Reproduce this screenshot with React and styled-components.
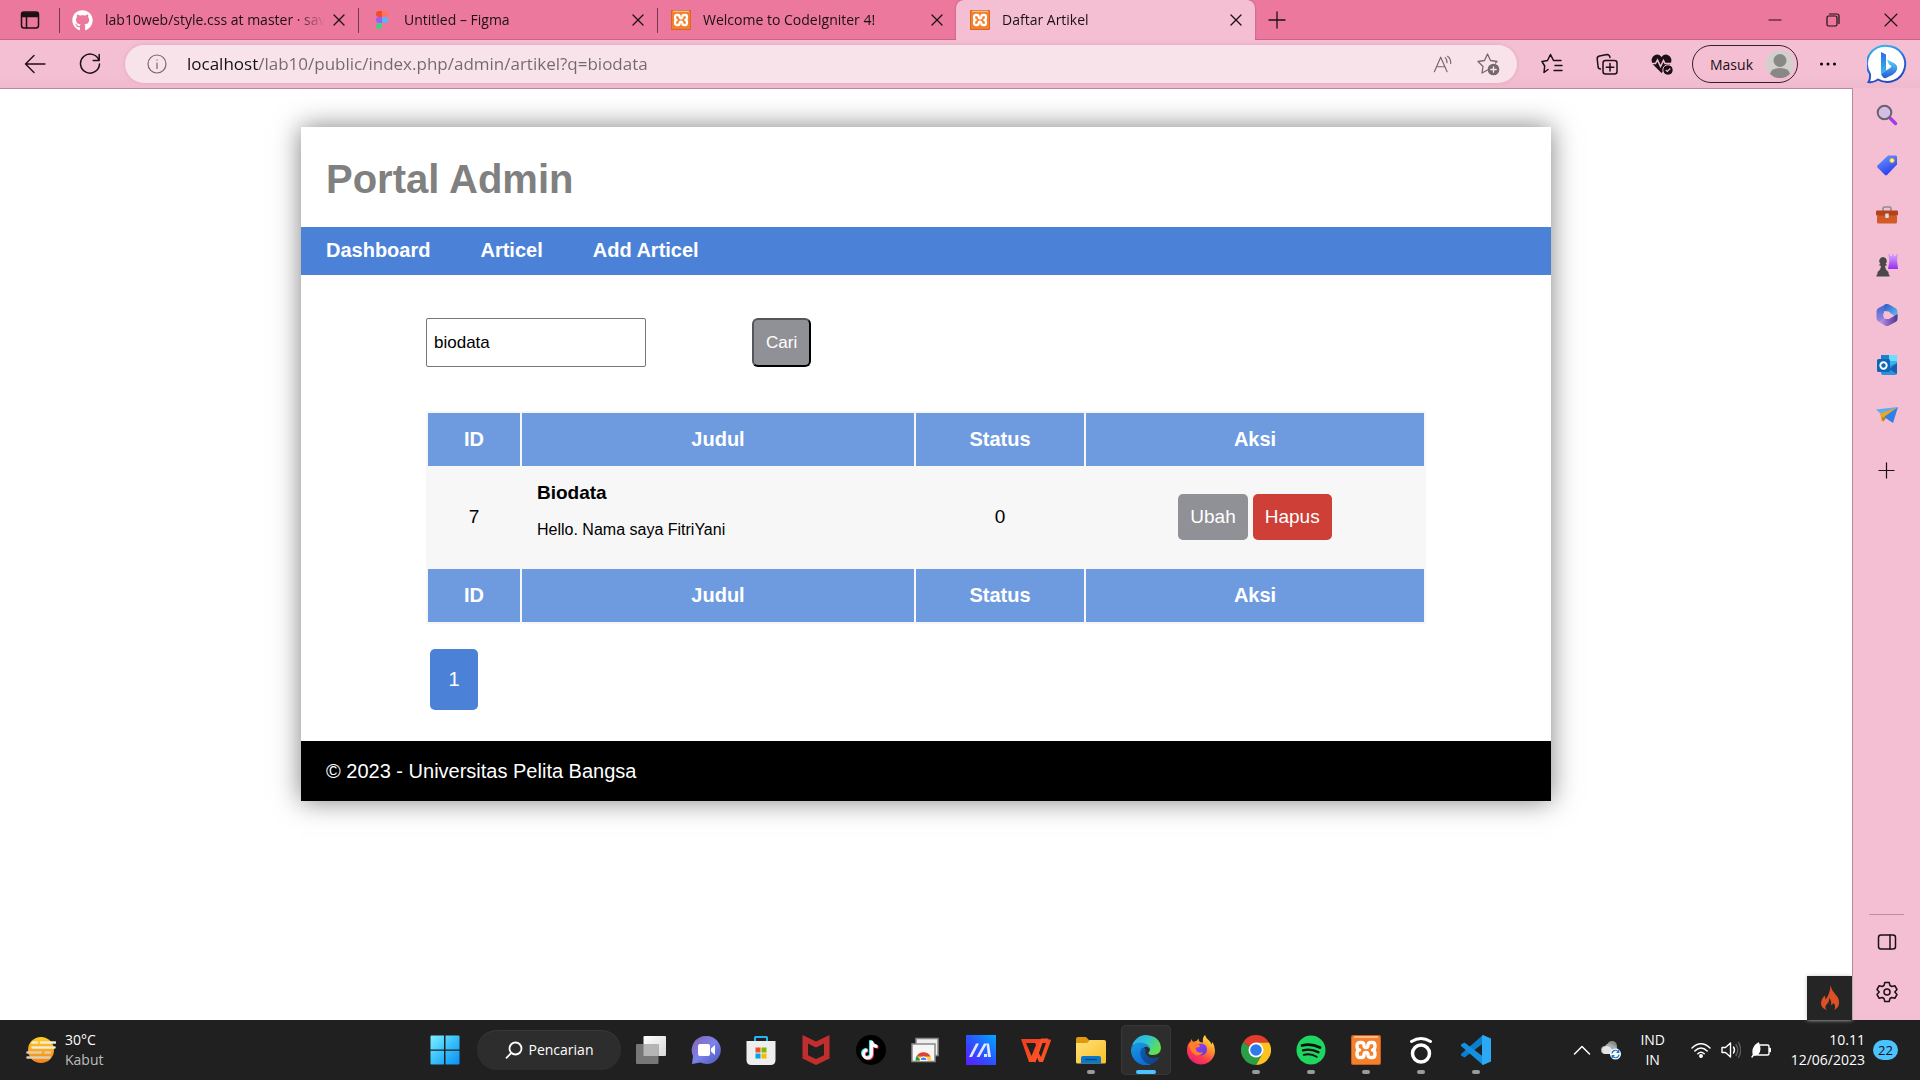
import React from "react";
import styled, { createGlobalStyle, css } from "styled-components";
import { FaGithub } from "react-icons/fa";

const ui = '"Open Sans", "Noto Sans", sans-serif';
const arial = '"Liberation Sans", Arial, sans-serif';

const GlobalStyle = createGlobalStyle`
  *, *::before, *::after { box-sizing: border-box; }
  body { margin: 0; background: #fff; font-family: ${ui}; }
  button { font: inherit; color: inherit; background: none; border: 0; padding: 0; margin: 0; }
  svg { display: block; flex: none; }
`;

const Desktop = styled.div`
  display: flex;
  flex-direction: column;
  min-height: 100vh;
`;

/* ---------- browser chrome ---------- */

const TabStrip = styled.header`
  display: flex;
  align-items: stretch;
  height: 40px;
  background: #ec789e;
  box-shadow: inset 0 -1px 0 #c9648a;
  color: #1b1015;
`;

const IconButton = styled.button`
  display: grid;
  place-items: center;
  width: ${(p) => p.$w || 50}px;
  height: ${(p) => p.$h || 40}px;
  flex: none;
`;

const Tab = styled.div`
  display: flex;
  align-items: center;
  width: 299px;
  padding: 0 9px 0 13px;
  position: relative;
  ${(p) =>
    p.$active
      ? css`
          background: #f4bfd3;
          border-radius: 8px 8px 0 0;
          box-shadow: 0 0 2px #a04a6c;
          clip-path: inset(0 -3px 0 -3px);
        `
      : css`
          &::before {
            content: "";
            position: absolute;
            left: 0;
            top: 8px;
            width: 1px;
            height: 25px;
            background: #6e3a4c;
          }
        `}
`;

const TabTitle = styled.span`
  flex: 1;
  margin: 0 0 0 12px;
  overflow: hidden;
  white-space: nowrap;
  font-size: 14px;
  line-height: 20px;
  mask-image: linear-gradient(90deg, #000 calc(100% - 34px), transparent calc(100% - 4px));
`;

const WindowControls = styled.div`
  display: flex;
  margin-left: auto;
`;

const Toolbar = styled.div`
  display: flex;
  align-items: center;
  gap: 5px;
  height: 48px;
  padding: 0 8px 0 10px;
  background: linear-gradient(#f4bfd3, #f4bfd3 70%, #efbace);
  color: #1b1015;
`;

const AddressBar = styled.form`
  display: flex;
  align-items: center;
  flex: 1;
  min-width: 0;
  height: 38px;
  margin: 0 5px;
  padding: 0 7px 0 22px;
  border-radius: 19px;
  background: #f8e3ea;
  box-shadow: 0 0 4px #e3a5bd;
  color: #75696e;
`;

const AddressInput = styled.input`
  flex: 1;
  min-width: 0;
  margin: 0 0 0 20px;
  padding: 0;
  border: 0;
  outline: 0;
  font: 17px/24px ${ui};
  color: transparent;
  background: linear-gradient(90deg, #111 72px, #73686d 72px);
  background-clip: text;
`;

const SignIn = styled.button`
  display: flex;
  align-items: center;
  justify-content: space-between;
  width: 106px;
  height: 38px;
  padding: 0 3px 0 17px;
  border: 1px solid #33222a;
  border-radius: 19px;
  font-size: 14px;
  flex: none;
`;

const BingButton = styled(IconButton)`
  margin-left: 4px;
`;

/* ---------- window body ---------- */

const WindowBody = styled.div`
  display: flex;
  flex: 1;
`;

const Viewport = styled.main`
  position: relative;
  flex: 1;
  min-width: 0;
  padding-top: 38px;
  border-top: 1px solid #b58b9b;
  border-right: 1px solid #b58b9b;
  background: #fff;
  font-family: ${arial};
`;

const SideBar = styled.aside`
  display: flex;
  flex-direction: column;
  align-items: center;
  width: 67px;
  padding: 2px 0 3px;
  background: #f4bfd3;
  color: #1b1015;
`;

const SideBottom = styled.div`
  display: flex;
  flex-direction: column;
  align-items: center;
  margin-top: auto;
  &::before {
    content: "";
    width: 35px;
    height: 1px;
    margin-bottom: 2px;
    background: #bd8ea1;
  }
`;

const DebugToggle = styled.button`
  position: absolute;
  right: 0;
  bottom: 0;
  display: grid;
  place-items: center;
  width: 45px;
  height: 44px;
  background: #252525;
  box-shadow: 0 0 4px #ccc;
`;

/* ---------- admin page ---------- */

const Card = styled.div`
  max-width: 1250px;
  margin: 0 auto;
  background: #fff;
  box-shadow: 0 0 25px rgba(0, 0, 0, 0.5);
  font-size: 20px;
  line-height: 24px;
`;

const Title = styled.h1`
  margin: 0;
  padding: 30px 25px 26px;
  font-size: 40px;
  line-height: 44px;
  color: gray;
`;

const Nav = styled.nav`
  display: flex;
  background: #4b82d8;
`;

const NavLink = styled.a`
  padding: 11px 25px 13px;
  font-weight: bold;
  color: #fff;
  text-decoration: none;
`;

const Content = styled.section`
  padding: 43px 10% 31px;
`;

const SearchForm = styled.form`
  display: flex;
  gap: 106px;
  margin-bottom: 44px;
`;

const SearchInput = styled.input`
  width: 220px;
  height: 49px;
  padding: 0 7px;
  border: 1px solid #767676;
  border-radius: 2px;
  font: 17px ${arial};
  color: #000;
`;

const SearchButton = styled.button`
  height: 49px;
  padding: 0 12px;
  border: 2px outset #000;
  border-color: #55565a #000 #000 #55565a;
  border-radius: 6px;
  background: #909196;
  color: #fff;
  font-size: 17px;
`;

const Table = styled.table`
  width: 100%;
  table-layout: fixed;
  border-spacing: 2px;
  background: #f7f7f7;
`;

const Col = styled.col`
  width: ${(p) => p.$w};
`;

const HeadCell = styled.th`
  padding: 15px;
  line-height: 23px;
  background: #6e9be0;
  color: #fff;
`;

const Cell = styled.td`
  padding: 14px 15px 16px;
  font-size: 19px;
  line-height: 22px;
  text-align: ${(p) => (p.$left ? "left" : "center")};
`;

const Excerpt = styled.p`
  margin: 16px 0 11px;
  font-size: 16px;
  line-height: 20px;
`;

const Actions = styled.div`
  display: flex;
  justify-content: center;
  gap: 5px;
`;

const Action = styled.a`
  padding: 12px;
  border-radius: 5px;
  background: ${(p) => (p.$danger ? "#cd3f37" : "#909196")};
  color: #fff;
  text-decoration: none;
`;

const Pagination = styled.nav`
  display: flex;
  margin: 25px 4px 0;
`;

const PageLink = styled.a`
  display: grid;
  place-items: center;
  width: 48px;
  height: 61px;
  padding-bottom: 2px;
  border-radius: 5px;
  background: #4b82d8;
  color: #fff;
  text-decoration: none;
`;

const PageFooter = styled.footer`
  padding: 18px 25px;
  background: #000;
  color: #fff;
`;

/* ---------- task bar ---------- */

const TaskBar = styled.footer`
  display: grid;
  grid-template-columns: 1fr auto 1fr;
  align-items: center;
  height: 60px;
  background: #202020;
  color: #fff;
  font-size: 14px;
  line-height: 20px;
`;

const Weather = styled.button`
  display: flex;
  align-items: center;
  gap: 9px;
  padding-left: 26px;
  text-align: left;
  line-height: 20px;
`;

const Muted = styled.span`
  display: block;
  color: #bdbdbd;
`;

const Apps = styled.div`
  display: flex;
  align-items: center;
  gap: 5px;
  padding-left: 1px;
`;

const TaskSearch = styled.button`
  display: flex;
  align-items: center;
  justify-content: center;
  gap: 6px;
  width: 144px;
  height: 40px;
  margin-left: 2px;
  border-radius: 20px;
  background: #2d2d2d;
  box-shadow: inset 0 1px 0 #393939;
`;

const AppButton = styled.button`
  position: relative;
  display: grid;
  place-items: center;
  width: 50px;
  height: 50px;
  border-radius: 5px;
  ${(p) => p.$active && "background: #2d2d2d; box-shadow: inset 0 0 0 1px #383838;"}
  &::after {
    content: "";
    position: absolute;
    bottom: 1px;
    left: 50%;
    width: ${(p) => (p.$active ? 20 : 8)}px;
    height: 4px;
    border-radius: 2px;
    transform: translateX(-50%);
    background: ${(p) => (p.$active ? "#4cc2ff" : p.$running ? "#9a9a9a" : "transparent")};
  }
`;

const Tray = styled.div`
  display: flex;
  align-items: center;
  justify-content: flex-end;
  gap: 10px;
  padding-right: 22px;
`;

const Language = styled.button`
  width: 40px;
  margin: 0 8px 0 2px;
  text-align: center;
  line-height: 20px;
`;

const Clock = styled.button`
  margin-left: 10px;
  text-align: right;
  line-height: 20px;
`;

const Badge = styled.span`
  display: grid;
  place-items: center;
  width: 25px;
  height: 20px;
  margin-left: -2px;
  border-radius: 10px;
  background: #4cc2ff;
  color: #111;
  font-size: 13px;
`;

/* ---------- drawings ---------- */

const Line = ({ s = 20, w = 1.3, vb = 20, children }) => (
  <svg width={s} height={s} viewBox={`0 0 ${vb} ${vb}`} fill="none" stroke="currentColor" strokeWidth={w} strokeLinecap="round" strokeLinejoin="round" aria-hidden="true">
    {children}
  </svg>
);

const Art = ({ s = 30, vb = 30, children }) => (
  <svg width={s} height={s} viewBox={`0 0 ${vb} ${vb}`} aria-hidden="true">
    {children}
  </svg>
);

const Grad = ({ id, stops, x1 = 0, y1 = 0, x2 = 1, y2 = 1 }) => (
  <linearGradient id={id} x1={x1} y1={y1} x2={x2} y2={y2}>
    {stops.map((c, i) => (
      <stop key={i} offset={i / (stops.length - 1)} stopColor={c} />
    ))}
  </linearGradient>
);

const CloseIcon = () => (
  <Line s={12} vb={12} w={1.3}><path d="M1 1l10 10M11 1L1 11" /></Line>
);

const PlusIcon = ({ s = 18 }) => (
  <Line s={s} vb={18} w={1.3}><path d="M9 1v16M1 9h16" /></Line>
);

const XamppIcon = ({ s }) => (
  <Art s={s}>
    <rect width="30" height="30" rx="2" fill="#c8601f" />
    <rect x="1" y="1" width="28" height="28" rx="1.5" fill="#f57f2b" />
    <rect x="3" y="1" width="24" height="2" fill="#f9b98a" />
    <path d="M8.5 7.5h2Q13 7.500 13 10q0 2.500 2 2.500T17 10q0-2.500 2.500-2.500h2Q24 7.500 24 11q0 4-2.500 4Q24 15 24 19q0 3.500-2.500 3.500h-2Q17 22.500 17 20q0-2.500-2-2.500T13 20q0 2.500-2.500 2.500h-2Q6 22.500 6 19q0-4 2.500-4Q6 15 6 11q0-3.500 2.500-3.500z" fill="none" stroke="#fff" strokeWidth="3.400" strokeLinejoin="round" />
  </Art>
);

const FigmaIcon = () => (
  <svg width="12" height="20" viewBox="0 0 12 18" aria-hidden="true">
    <path d="M3 0h3v6H3a3 3 0 010-6z" fill="#f24e1e" />
    <path d="M6 0h3a3 3 0 010 6H6z" fill="#ff7262" />
    <path d="M3 6h3v6H3a3 3 0 010-6z" fill="#a259ff" />
    <circle cx="9" cy="9" r="3" fill="#4db8ff" />
    <path d="M3 12h3v3a3 3 0 11-3-3z" fill="#45cf83" />
  </svg>
);

const BingIcon = () => (
  <Art s={40} vb={40}>
    <defs>
      <Grad id="bg1" stops={["#35c3f3", "#2b6fe0", "#2449c8"]} x2={0.3} />
      <Grad id="bg2" stops={["#2a6be8", "#37bdf0"]} x2={0} />
      <Grad id="bg3" stops={["#5fd6f5", "#2455d8"]} x2={0} />
    </defs>
    <path d="M20 2a18 18 0 11-9 33.500Q6 39 1.500 38q2-3 1.500-8A18 18 0 0120 2z" fill="#fff" stroke="url(#bg1)" strokeWidth="2" />
    <path d="M14 8l5 2.500v16L14 30z" fill="url(#bg2)" />
    <path d="M14 30l5-3.500 4-2.500q3-2-1-3.500l-2-5 7 3.500q4 2 3 6.500-.5 3-4 5L19 34q-3 1-5-4z" fill="url(#bg3)" />
  </Art>
);

const SearchColor = () => (
  <Art s={22} vb={22}>
    <path d="M14.500 14.500l5 5" stroke="#a53be8" strokeWidth="3.500" strokeLinecap="round" />
    <circle cx="8.500" cy="8.500" r="6.800" fill="#d3bfe6" stroke="#68636b" strokeWidth="2" />
  </Art>
);
const TagIcon = () => (
  <Art s={22} vb={22}>
    <defs><Grad id="tg" stops={["#6aa2ff", "#2b3cf0"]} x2={0.5} /></defs>
    <path d="M12 1.500h7.500q1.500 0 1.500 1.500v7.500L11 21q-1 .8-2 0L1.500 13.500q-.8-1 0-2z" fill="url(#tg)" />
    <circle cx="16" cy="6.500" r="2.200" fill="#fff3a0" stroke="#e0b52b" />
  </Art>
);
const ToolboxIcon = () => (
  <Art s={24} vb={24}>
    <path d="M8 8V5.500Q8 4 9.500 4h5Q16 4 16 5.500V8" fill="none" stroke="#8c8c8c" strokeWidth="1.600" />
    <rect x="2" y="12" width="20" height="8.500" rx="1.500" fill="#d25a27" />
    <rect x="1" y="7.500" width="22" height="5" rx="1" fill="#b1441c" />
    <rect x="10.200" y="10.500" width="3.600" height="4.500" rx=".8" fill="#dadada" />
  </Art>
);
const GamesIcon = () => (
  <Art s={24} vb={24}>
    <defs><Grad id="gm" stops={["#d6a8ff", "#9a2bf0"]} x2={0} /></defs>
    <path d="M13 1h2v2h2V1h2v2h2V1h2l-1 6 1 9H13l1.500-9z" fill="url(#gm)" />
    <path d="M8 4a4 4 0 012.500 7h1v1.800H10q.3 4.200 3.500 6.200v2q1.500.5 1 2.500h-13q-.5-2 1-2.500v-2Q5.700 17 6 12.800H4.500V11h1A4 4 0 018 4z" fill="#4b484b" />
  </Art>
);
const M365Icon = () => (
  <Art s={24} vb={24}>
    <defs>
      <Grad id="m1" stops={["#2f55c0", "#4a8fe0", "#63c6f5"]} />
      <Grad id="m2" stops={["#3d63cf", "#9a8be0"]} x2={0} />
      <Grad id="m3" stops={["#c59be8", "#8a62c4", "#4a3590"]} x1={0} x2={1} y2={0} />
    </defs>
    <path d="M9 2l2-1q2-.5 4 1l6 3.500q1.500 1 1.500 3V15L16 10.500 9 8z" fill="url(#m1)" />
    <path d="M11.500 1L3.500 5Q1.500 6 1.500 8.500v7q0 2 2 3L5 19l4-3.500V7q0-4 2.500-6z" fill="url(#m2)" />
    <path d="M4 19l5-3.500 5 .5 8.500-5V16q0 2-2 3L14 22.500q-2 1-4 0z" fill="url(#m3)" />
    <circle cx="12" cy="12" r="3.800" fill="#f4bfd3" />
  </Art>
);
const OutlookIcon = () => (
  <Art s={22} vb={22}>
    <path d="M5 1h15q1 0 1 1v12H5z" fill="#35b5ee" />
    <path d="M5 1h8v6H5z" fill="#1d7fd0" /><path d="M13 1h8v6h-8z" fill="#6fdcff" />
    <path d="M5 14l8-2 8-3v10q0 2-2 2H7q-2 0-2-2z" fill="#2e8fdd" />
    <path d="M13 15l8-6v11z" fill="#1a5fae" />
    <rect x="1" y="5" width="13" height="13" rx="1.500" fill="#1066b8" />
    <circle cx="7.500" cy="11.500" r="3.200" fill="none" stroke="#fff" strokeWidth="1.900" />
  </Art>
);
const SendIcon = () => (
  <Art s={22} vb={22}>
    <path d="M0 5.500L22 3 7 12z" fill="#58aef0" />
    <path d="M22 3L5 11v6z" fill="#e9a62b" />
    <path d="M22 3L8 13l9 6z" fill="#2f80e8" />
    <path d="M4 9.500L18 4.500 8 12.500 6 18z" fill="#e9a62b" />
    <path d="M6 13l1 5 3-4z" fill="#c07c13" />
  </Art>
);

const AppArt = {
  windows: (
    <Art>
      <defs><Grad id="win" stops={["#7df0ff", "#38c0fb", "#0b8ff5"]} /></defs>
      <path fill="url(#win)" d="M1.500 .5H14v14H.5v-13q0-1 1-1zM15.500 .5h13q1 0 1 1v13h-14zM.5 15.800H14v13.700H1.500q-1 0-1-1zM15.500 15.800h14v12.700q0 1-1 1h-13z" />
    </Art>
  ),
  views: (
    <Art>
      <defs><Grad id="tv" stops={["#fff", "#d8d8d8"]} /></defs>
      <rect x="7.500" y="1" width="22.500" height="20" rx="1" fill="url(#tv)" />
      <rect x="0" y="9" width="22.500" height="20" rx="1" fill="#777" />
      <path d="M7.500 9h15v12h-15z" fill="#b5b5b5" />
    </Art>
  ),
  chat: (
    <Art>
      <defs><Grad id="ch" stops={["#8b5fae", "#7b83eb", "#4b53bc"]} /></defs>
      <path d="M15.500 1a14 14 0 11-6 26.500L1 29l1-8A14 14 0 0115.500 1z" fill="url(#ch)" />
      <rect x="7" y="9" width="12" height="12" rx="2" fill="#fff" />
      <path d="M20 13.500l4-3.500v10l-4-3.500z" fill="#fff" />
    </Art>
  ),
  store: (
    <Art>
      <path d="M9 8V2.500Q9 2 9.500 2h11q.5 0 .5.500V8" fill="none" stroke="#28b4ee" strokeWidth="2" />
      <path d="M.5 6h29v19q0 5-5 5h-19q-5 0-5-5z" fill="#eee" />
      <path d="M9.500 12.500h5v5h-5z" fill="#f25022" /><path d="M15.500 12.500h5v5h-5z" fill="#7fba00" />
      <path d="M9.500 18.500h5v5h-5z" fill="#00a4ef" /><path d="M15.500 18.500h5v5h-5z" fill="#ffb900" />
    </Art>
  ),
  mcafee: (
    <Art><path d="M1.500 0L15 6.500 28.500 0v23.500L15 30 1.500 23.500zM7 8.500v11.700L15 24l8-3.800V8.500l-8 4z" fill="#c12e2e" fillRule="evenodd" /></Art>
  ),
  tiktok: (
    <Art>
      <circle cx="15" cy="15" r="15" fill="#000" />
      <g fill="none" strokeWidth="3">
        <path d="M15.500 6v13a4 4 0 11-4-4M15.500 6q.5 5 6 5.500" stroke="#25f4ee" transform="translate(-1 -.8)" />
        <path d="M15.500 6v13a4 4 0 11-4-4M15.500 6q.5 5 6 5.500" stroke="#fe2c55" transform="translate(1 .8)" />
        <path d="M15.500 6v13a4 4 0 11-4-4M15.500 6q.5 5 6 5.500" stroke="#fff" />
      </g>
    </Art>
  ),
  remote: (
    <Art>
      <rect x="5" y="3.500" width="22" height="17" fill="#eee" stroke="#888" strokeWidth="1.500" />
      <rect x="1" y="9" width="23" height="17.500" fill="#f6f6f6" stroke="#888" strokeWidth="1.500" />
      <path d="M4.500 25.500a8 8 0 0116 0z" fill="#ffcd40" />
      <path d="M5.500 21.500a8 8 0 0114 0h-7z" fill="#db4437" />
      <path d="M4.500 25.500q0-2.500 1.200-4.500l4.300 4.500z" fill="#0f9d58" />
      <path d="M9 25.500a3.600 3.600 0 017.200 0z" fill="#4285f4" stroke="#fff" strokeWidth="1" />
    </Art>
  ),
  armoury: (
    <Art>
      <defs><Grad id="ma" stops={["#5a1cff", "#2a55ff", "#00a8ff"]} y1={1} y2={0} /></defs>
      <rect width="30" height="30" fill="url(#ma)" />
      <path d="M3 22L10 8.500h3L6 22zM10.500 22L18 8.500h3L13.500 22zM20.500 8.500h2.500L25 22h-3zM18 19h3v3h-3z" fill="#dfe9ff" />
    </Art>
  ),
  wps: (
    <Art>
      <defs><Grad id="wp" stops={["#f23a22", "#ff5a1f"]} /></defs>
      <path d="M0 4h26q4 0 4 1.500L22 27h-4l-3-7-3 7H8zM5 8l5.500 13L15 10l-1-2zM19 8l-3 7 4 7 5-14z" fill="url(#wp)" fillRule="evenodd" />
      <path d="M13 27L21 5h6" fill="none" stroke="#ff4f28" strokeWidth="3" />
    </Art>
  ),
  files: (
    <Art>
      <defs><Grad id="fo" stops={["#ffe07a", "#fbbf24"]} /></defs>
      <path d="M0 4q0-2 2-2h8l3 3h10v6H0z" fill="#dd9b0c" />
      <path d="M0 8h11l3-3h14q2 0 2 2v20q0 1.500-1.500 1.500h-27Q0 28.500 0 27z" fill="url(#fo)" />
      <path d="M5 28.500V23q0-2 2-2h16q2 0 2 2v5.500z" fill="#0a77c8" />
      <path d="M9 24.500h12" stroke="#04467d" strokeWidth="1.200" />
    </Art>
  ),
  edge: (
    <Art>
      <defs>
        <Grad id="e1" stops={["#2aa9ee", "#2fc3d8", "#62e04c"]} y2={0.5} />
        <Grad id="e2" stops={["#1b9de2", "#0b6fd6"]} x2={0.4} />
        <Grad id="e3" stops={["#0d5fb8", "#123d7c"]} />
      </defs>
      <path d="M.5 12.500A15 15 0 0115 0q14 1 15 13-.5 7-8 7-5 0-4.500-2.500 1.800-1.500 1.300-4Q17 9 10 9-1 9 .5 12.500z" fill="url(#e1)" />
      <path d="M0 15Q1 7.500 9 7.500q8.500 0 10 6.500-4-4-7-.5-3 5 0 10 3 5 8 6A15 15 0 010 15z" fill="url(#e2)" />
      <path d="M11 13q-3 4-1 8.500 4 9 11 7.500 5-2.500 7-6 .5-1.500-1-1Q22 24.500 18 22q-4-2.500-3.500-7-.5-3-3.500-2z" fill="url(#e3)" />
    </Art>
  ),
  firefox: (
    <Art>
      <defs>
        <Grad id="f1" stops={["#fff04a", "#ff9a2a", "#ff3f4c", "#e01a7a"]} x1={0.8} x2={0.2} />
        <Grad id="f2" stops={["#a03cf0", "#5a3fd8"]} />
      </defs>
      <path d="M5.500 4q.5 2 2 3 1.500-1 3-1l2-2.500q0 2 1.500 3.500l3 .5Q16 3 19 0q1 3.500 4 5.500 2 2 2.500 4l1-2.500Q29 11 29 16A14 14 0 011 15Q1 9 4.500 6.500z" fill="url(#f1)" />
      <circle cx="15" cy="14.500" r="6" fill="url(#f2)" />
      <path d="M3 9q4-3 7-1l4 2.500q0 2-4 2-1 3 2 4.500 3 1 5.500 0-3 4-8 3Q4 17.500 3 9z" fill="#ff7d2b" />
    </Art>
  ),
  chrome: (
    <Art>
      <path d="M15 15L2 7.500A15 15 0 0128 7.500H15z" fill="#e33b2e" />
      <path d="M15 15l6.500 3.700L15 30A15 15 0 012 7.500z" fill="#2b9e48" />
      <path d="M15 7.500h13A15 15 0 0115 30l6.500-11.300z" fill="#fcc31e" />
      <circle cx="15" cy="15" r="7.500" fill="#fff" /><circle cx="15" cy="15" r="5.800" fill="#2d7bea" />
    </Art>
  ),
  spotify: (
    <Art>
      <circle cx="15" cy="15" r="14.500" fill="#1ed760" />
      <g fill="none" stroke="#111" strokeLinecap="round">
        <path d="M6 10.500q9-2.500 18 2" strokeWidth="2.800" /><path d="M7 15.300q8-2.200 15.500 2" strokeWidth="2.300" /><path d="M7.700 19.800q7-1.700 13 1.900" strokeWidth="1.900" />
      </g>
    </Art>
  ),
  xampp: <XamppIcon s={30} />,
  orbit: (
    <Art>
      <circle cx="15" cy="18.500" r="8.500" fill="none" stroke="#fff" strokeWidth="3.500" />
      <path d="M5.500 6.500Q15 .5 24.500 6.500" fill="none" stroke="#fff" strokeWidth="3" strokeLinecap="round" />
    </Art>
  ),
  vscode: (
    <Art>
      <path d="M22 0v8.500L3.500 22.500 0 20.500V19z" fill="#0a7fcf" />
      <path d="M0 9.500l3.500-2L22 21.500V30L0 11z" fill="#1590e0" />
      <path d="M22 0l8 3.500v23L22 30l-1-1V1z" fill="#2ba9f4" />
    </Art>
  ),
};

const tabs = [
  { title: "lab10web/style.css at master · sav", icon: <FaGithub size={21} color="#fff" /> },
  { title: "Untitled – Figma", icon: <FigmaIcon /> },
  { title: "Welcome to CodeIgniter 4!", icon: <XamppIcon s={20} /> },
  { title: "Daftar Artikel", icon: <XamppIcon s={20} />, active: true },
];

const TabIcon = styled.span`
  display: flex;
  width: 21px;
  justify-content: center;
`;

const sideItems = [
  ["Search", <SearchColor />],
  ["Shopping", <TagIcon />],
  ["Tools", <ToolboxIcon />],
  ["Games", <GamesIcon />],
  ["Microsoft 365", <M365Icon />],
  ["Outlook", <OutlookIcon />],
  ["Drop", <SendIcon />],
];

const apps = [
  ["Task view", "views"], ["Chat", "chat"], ["Microsoft Store", "store"], ["McAfee", "mcafee"],
  ["TikTok", "tiktok"], ["Remote Desktop", "remote"], ["MyASUS", "armoury"], ["WPS Office", "wps"],
  ["File Explorer", "files", true], ["Microsoft Edge", "edge", true, true], ["Firefox", "firefox"],
  ["Chrome", "chrome", true], ["Spotify", "spotify", true], ["XAMPP", "xampp", true],
  ["Orbit", "orbit", true], ["Visual Studio Code", "vscode", true],
];

const headings = ["ID", "Judul", "Status", "Aksi"];
const articles = [{ id: 7, title: "Biodata", body: "Hello. Nama saya FitriYani", status: 0 }];

const HeadingRow = () => (
  <tr>{headings.map((h) => <HeadCell key={h} scope="col">{h}</HeadCell>)}</tr>
);

function BrowserChrome() {
  return (
    <>
      <TabStrip>
        <IconButton $w={59} aria-label="Tab actions">
          <Line s={20} w={1.5}><rect x="1.500" y="2" width="17" height="16" rx="2.500" /><path d="M2 3h16v3.500H2z" fill="currentColor" /><path d="M6.500 7v11" /></Line>
        </IconButton>
        {tabs.map((t) => (
          <Tab key={t.title} $active={t.active}>
            <TabIcon>{t.icon}</TabIcon>
            <TabTitle>{t.title}</TabTitle>
            <IconButton $w={20} $h={20} aria-label="Close tab"><CloseIcon /></IconButton>
          </Tab>
        ))}
        <IconButton $w={44} aria-label="New tab"><PlusIcon /></IconButton>
        <WindowControls>
          <IconButton $w={58} aria-label="Minimize"><Line s={14} vb={14} w={1.2}><path d="M1 7h12" /></Line></IconButton>
          <IconButton $w={58} aria-label="Restore"><Line s={14} vb={14} w={1.2}><rect x="1" y="3" width="10" height="10" rx="1.500" /><path d="M3.500 1H11q2 0 2 2v7.500" /></Line></IconButton>
          <IconButton $w={58} aria-label="Close"><Line s={14} vb={14} w={1.1}><path d="M1 1l12 12M13 1L1 13" /></Line></IconButton>
        </WindowControls>
      </TabStrip>
      <Toolbar>
        <IconButton aria-label="Back"><Line s={22} vb={22} w={1.4}><path d="M21 11H1.500M10 2.500L1.500 11l8.500 8.500" /></Line></IconButton>
        <IconButton aria-label="Refresh"><Line s={22} vb={22} w={1.500}><path d="M20 7.500A9.500 9.500 0 1020.500 11M20.200 1.500v6h-6" /></Line></IconButton>
        <AddressBar onSubmit={(e) => e.preventDefault()}>
          <Line s={20} w={1.2}><circle cx="10" cy="10" r="9" /><path d="M10 9v5.500M10 5.800v.3" /></Line>
          <AddressInput aria-label="Address" defaultValue="localhost/lab10/public/index.php/admin/artikel?q=biodata" />
          <IconButton $w={45} $h={38} type="button" aria-label="Read aloud">
            <Line s={20} vb={22} w={1.3}><path d="M1.500 19.500L8.500 3.500l7 16M4 14h9M13.500 4q2 2 1.800 5.500M16 2.500q4 3 3.500 8" /></Line>
          </IconButton>
          <IconButton $w={45} $h={38} type="button" aria-label="Add to favorites">
            <Line s={24} vb={24} w={1.3}><path d="M11.500 18l-5.500 3 1-6.500L2 9.500l6.500-1 3-6.500 3 6.500 6.500 1-1.500 1.500" /><circle cx="17.500" cy="17.500" r="5.200" fill="currentColor" /><path d="M17.500 14.800v5.400M14.800 17.500h5.400" stroke="#f8e3ea" /></Line>
          </IconButton>
        </AddressBar>
        <IconButton aria-label="Favorites"><Line s={22} vb={22} w={1.500}><path d="M7 16.500l-4 3 .7-6.500L1 8.500l5.500-1L9.500 1.500l3 6H20M14 12.500h7M13 17.500h8" /></Line></IconButton>
        <IconButton aria-label="Collections"><Line s={22} vb={22} w={1.500}><path d="M4.500 16Q2 16 2 13L1.200 6Q1 3.500 3.500 3L11 1.500q2.500 0 3 3" /><rect x="7" y="7.500" width="14" height="13.500" rx="2.500" /><path d="M14 10.500v7.500M10.300 14.200h7.500" /></Line></IconButton>
        <IconButton aria-label="Browser essentials">
          <Art s={22} vb={22}><path d="M10.500 20L2 11.500Q-.8 7.500 2 3.500 6.500-.5 10.500 4q4-4.500 8.500-.5 2.800 4 0 8z" fill="#1b1015" /><path d="M0 10.500h4.500l2-3.500 3 6.500 3-6 1.500 3h7" fill="none" stroke="#f4bfd3" strokeWidth="1.500" /><circle cx="17" cy="17" r="5.200" fill="#1b1015" stroke="#f4bfd3" /><path d="M14.800 17l1.500 1.500 3-3" fill="none" stroke="#f4bfd3" strokeWidth="1.200" /></Art>
        </IconButton>
        <SignIn>
          Masuk
          <Art s={28} vb={28}><circle cx="14" cy="14" r="14" fill="#d2cfcd" /><circle cx="14" cy="10.500" r="6.500" fill="#8a8886" /><path d="M4 24q1-6 10-6t10 6a14 14 0 01-20 0z" fill="#8a8886" /></Art>
        </SignIn>
        <IconButton aria-label="Settings and more"><Art s={18} vb={18}><circle cx="2.500" cy="9" r="1.500" /><circle cx="9" cy="9" r="1.500" /><circle cx="15.500" cy="9" r="1.500" /></Art></IconButton>
        <BingButton aria-label="Bing"><BingIcon /></BingButton>
      </Toolbar>
    </>
  );
}

function AdminPage() {
  return (
    <Card>
      <Title>Portal Admin</Title>
      <Nav>
        <NavLink href="#dashboard">Dashboard</NavLink>
        <NavLink href="#articel">Articel</NavLink>
        <NavLink href="#add">Add Articel</NavLink>
      </Nav>
      <Content>
        <SearchForm onSubmit={(e) => e.preventDefault()}>
          <SearchInput name="q" aria-label="Cari artikel" defaultValue="biodata" />
          <SearchButton type="submit">Cari</SearchButton>
        </SearchForm>
        <Table>
          <colgroup><Col $w="92px" /><Col /><Col $w="168px" /><Col $w="338px" /></colgroup>
          <thead><HeadingRow /></thead>
          <tbody>
            {articles.map((a) => (
              <tr key={a.id}>
                <Cell>{a.id}</Cell>
                <Cell $left><b>{a.title}</b><Excerpt>{a.body}</Excerpt></Cell>
                <Cell>{a.status}</Cell>
                <Cell><Actions><Action href="#ubah">Ubah</Action><Action href="#hapus" $danger>Hapus</Action></Actions></Cell>
              </tr>
            ))}
          </tbody>
          <tfoot><HeadingRow /></tfoot>
        </Table>
        <Pagination aria-label="Halaman"><PageLink href="#1">1</PageLink></Pagination>
      </Content>
      <PageFooter>© 2023 - Universitas Pelita Bangsa</PageFooter>
    </Card>
  );
}

function SystemTaskBar() {
  return (
    <TaskBar>
      <Weather>
        <Art s={30}>
          <defs><Grad id="sun" stops={["#ffcf1f", "#f5821f"]} x2={0} /></defs>
          <circle cx="15" cy="15" r="13" fill="url(#sun)" />
          <g strokeWidth="2.600" strokeLinecap="round"><path d="M6.500 7.500H11M15 7.500h14M6.500 12.500h22" stroke="#f3ead8" /><path d="M1.500 17.500H15M19.500 17.500H24M1.500 22.500h22" stroke="#ddd0b0" /></g>
        </Art>
        <span>30°C<Muted>Kabut</Muted></span>
      </Weather>
      <Apps>
        <AppButton aria-label="Start">{AppArt.windows}</AppButton>
        <TaskSearch>
          <Line s={18} vb={18} w={1.8}><circle cx="10.500" cy="7.500" r="6" /><path d="M6.200 12L1.500 16.800" /></Line>
          Pencarian
        </TaskSearch>
        {apps.map(([name, art, running, active]) => (
          <AppButton key={name} aria-label={name} $running={running} $active={active}>{AppArt[art]}</AppButton>
        ))}
      </Apps>
      <Tray>
        <Line s={18} vb={18} w={1.5}><path d="M1.500 13L9 5.500l7.500 7.500" /></Line>
        <Art s={20} vb={20}>
          <circle cx="11" cy="6" r="5" fill="#8d8d8d" /><path d="M4 14a4 4 0 010-8 5 5 0 018-1q4 1 5 5v4z" fill="#aaa" /><path d="M4 14a4 4 0 01.5-7.800q4-1 6.500 3.300l2 4.500z" fill="#e4e4e4" />
          <circle cx="14.500" cy="14" r="5.500" fill="#fff" /><path d="M11 13.500a3.500 3.500 0 016.500-1.500M18 14.500a3.500 3.500 0 01-6.500 1.500M17.800 10v2.300h-2.300M11.200 18v-2.300h2.300" fill="none" stroke="#1576d0" strokeWidth="1.200" />
        </Art>
        <Language>IND<br />IN</Language>
        <Line s={20} w={1.500}><path d="M1 8q9-8.500 18 0M3.800 11q6.200-6 12.400 0M6.800 13.800q3.200-3 6.400 0" /><circle cx="10" cy="16" r="1.200" fill="currentColor" /></Line>
        <Line s={20} w={1.400}><path d="M1 7.500v5h3.500l5 4.500V3l-5 4.500zM12.500 7q2 3 0 6" /><path d="M15 4.500q3.500 5.500 0 11M17.500 2.500q4.500 7.500 0 15" stroke="#5c5c5c" /></Line>
        <Line s={20} w={1.400}><path d="M9 5h7.500q1.500 0 1.500 1.500v7q0 1.500-1.500 1.500H7M19.300 8.500v3" /><path d="M7.500 3q3 8-1 11.500-2 1-4 .5Q.5 7 7.500 3zM1 17l4-6" fill="#fff" /></Line>
        <Clock>10.11<br />12/06/2023</Clock>
        <Badge>22</Badge>
      </Tray>
    </TaskBar>
  );
}

export default function App() {
  return (
    <Desktop>
      <GlobalStyle />
      <BrowserChrome />
      <WindowBody>
        <Viewport>
          <AdminPage />
          <DebugToggle aria-label="Debug toolbar">
            <Art s={26} vb={26}><path d="M13.500 .5q1 5 5 9t3.500 9q-.5 4.500-5 6.500 2.500-3.500-.5-7-1 2-2.500 2 1-4-2-7 .5 4-2.500 6.500-2.500 3 .5 5.500-5.500-1.500-6-6.500 0-4.500 4-8l.5 4Q13 9 13.500 .5z" fill="#dd4f25" /></Art>
          </DebugToggle>
        </Viewport>
        <SideBar>
          {sideItems.map(([name, icon]) => (
            <IconButton key={name} $h={50} aria-label={name}>{icon}</IconButton>
          ))}
          <IconButton $h={60} aria-label="Add app"><PlusIcon s={17} /></IconButton>
          <SideBottom>
            <IconButton $h={50} aria-label="Hide sidebar"><Line s={20} w={1.500}><rect x="1.500" y="3" width="17" height="14" rx="2.500" /><path d="M13 3v14" /></Line></IconButton>
            <IconButton $h={50} aria-label="Settings">
              <Line s={22} vb={22} w={1.500}><path d="M8.800 1.500h4.400l.8 3 1.800 1 3-.8 2.200 3.800L18.800 11l2.200 2.500-2.200 3.800-3-.8-1.800 1-.8 3H8.800l-.8-3-1.800-1-3 .8L1 13.500 3.200 11 1 8.500l2.200-3.800 3 .8 1.800-1z" /><circle cx="11" cy="11" r="3" /></Line>
            </IconButton>
          </SideBottom>
        </SideBar>
      </WindowBody>
      <SystemTaskBar />
    </Desktop>
  );
}
